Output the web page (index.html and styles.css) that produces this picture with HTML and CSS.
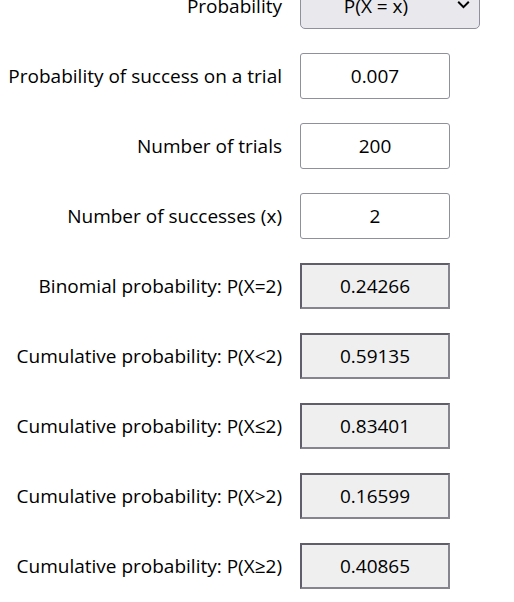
FILE: index.html
```html
<!DOCTYPE html>
<html lang="en">
<head>
<meta charset="UTF-8">
<meta name="viewport" content="width=device-width, initial-scale=1.0">
<title>Binomial Probability Calculator</title>
<link rel="stylesheet" href="styles.css">
</head>
<body>
<form id="binomial" class="calc">
    <div class="row">
        <label for="mode">Probability</label>
        <select id="mode" class="field choice">
            <option>P(X = x)</option>
            <option>P(X &lt; x)</option>
            <option>P(X &le; x)</option>
            <option>P(X &gt; x)</option>
            <option>P(X &ge; x)</option>
        </select>
    </div>
    <div class="row">
        <label for="p">Probability of success on a trial</label>
        <input type="text" id="p" class="field" value="0.007">
    </div>
    <div class="row">
        <label for="n">Number of trials</label>
        <input type="text" id="n" class="field" value="200">
    </div>
    <div class="row">
        <label for="x">Number of successes (x)</label>
        <input type="text" id="x" class="field" value="2">
    </div>
    <div class="row">
        <label>Binomial probability: P(X=2)</label>
        <output class="field result">0.24266</output>
    </div>
    <div class="row">
        <label>Cumulative probability: P(X&lt;2)</label>
        <output class="field result">0.59135</output>
    </div>
    <div class="row">
        <label>Cumulative probability: P(X&le;2)</label>
        <output class="field result">0.83401</output>
    </div>
    <div class="row">
        <label>Cumulative probability: P(X&gt;2)</label>
        <output class="field result">0.16599</output>
    </div>
    <div class="row">
        <label>Cumulative probability: P(X&ge;2)</label>
        <output class="field result">0.40865</output>
    </div>
</form>
</body>
</html>
```

FILE: styles.css
```css
body {
    font-family: "Open Sans", "Liberation Sans", sans-serif;
    font-size: 19px;
    color: #000;
    background-color: #fff;
    margin: 0;
    padding: 0;
}
.calc {
    display: flex;
    flex-direction: column;
    gap: 24px;
    margin-top: -17px;
}
.row {
    display: flex;
    align-items: center;
    height: 46px;
}
.row label {
    width: 282px;
    text-align: right;
    margin-right: 18px;
    white-space: nowrap;
}
.field {
    width: 150px;
    height: 46px;
    box-sizing: border-box;
    font-family: inherit;
    font-size: 19px;
    color: #000;
    text-align: center;
    border: 1px solid #8f8f9d;
    border-radius: 3px;
    background-color: #fff;
    padding: 0 4px;
}
.choice {
    width: 180px;
    appearance: none;
    -webkit-appearance: none;
    padding: 0 28px 0 0;
    background-color: #e9e9ed;
    background-image: url("data:image/svg+xml,%3Csvg xmlns='http://www.w3.org/2000/svg' width='13' height='9' viewBox='0 0 13 9'%3E%3Cpath d='M1.2 1.8l5.3 5.3 5.3-5.3' fill='none' stroke='%23000' stroke-width='2'/%3E%3C/svg%3E");
    background-repeat: no-repeat;
    background-position: right 9px top 16px;
    border-radius: 5px;
}
.result {
    display: flex;
    align-items: center;
    justify-content: center;
    border: 2px solid;
    border-color: #5f5e6a #85848f #85848f #5f5e6a;
    border-radius: 0;
    background-color: #efefef;
}
```
